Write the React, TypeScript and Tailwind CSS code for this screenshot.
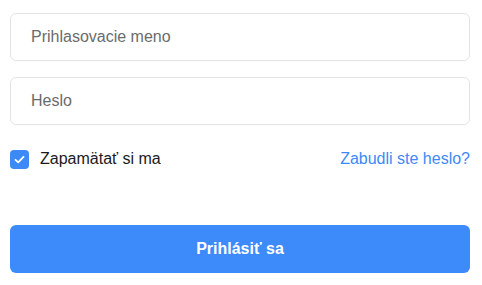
import React from "react";

export default function App() {
  return (
    <div className="w-[482px] h-[285px] bg-white pl-[10px] pr-[12px] pt-[13px]" style={{ fontFamily: '"Liberation Sans", Arial, sans-serif' }}>
      <div className="flex flex-col">
        <input
          placeholder="Prihlasovacie meno"
          className="h-12 w-full rounded-[6px] border border-[#e3e3e3] bg-white pl-5 text-[16px] text-[#333] placeholder:text-[#6b6b6b] outline-none"
        />
        <input
          type="password"
          placeholder="Heslo"
          className="mt-4 h-12 w-full rounded-[6px] border border-[#e3e3e3] bg-white pl-5 text-[16px] text-[#333] placeholder:text-[#6b6b6b] outline-none"
        />
        <div className="mt-6 flex h-5 items-center justify-between">
          <label className="flex items-center gap-[11px]">
            <span className="flex h-[19px] w-[19px] items-center justify-center rounded-[4px] bg-[#3d8af7]">
              <svg width="11" height="9" viewBox="0 0 11 9" fill="none">
                <path d="M1.5 4.8 L4.2 7.3 L9.5 1.8" stroke="white" strokeWidth="1.8" strokeLinecap="round" strokeLinejoin="round" />
              </svg>
            </span>
            <span className="text-[16px] text-[#1a1a1a]">Zapamätať si ma</span>
          </label>
          <a className="text-[16px] text-[#3d8af7]">Zabudli ste heslo?</a>
        </div>
        <button className="mt-[56px] h-12 w-full rounded-[6px] bg-[#3d8bfb] text-[16px] font-bold text-white">
          Prihlásiť sa
        </button>
      </div>
    </div>
  );
}
